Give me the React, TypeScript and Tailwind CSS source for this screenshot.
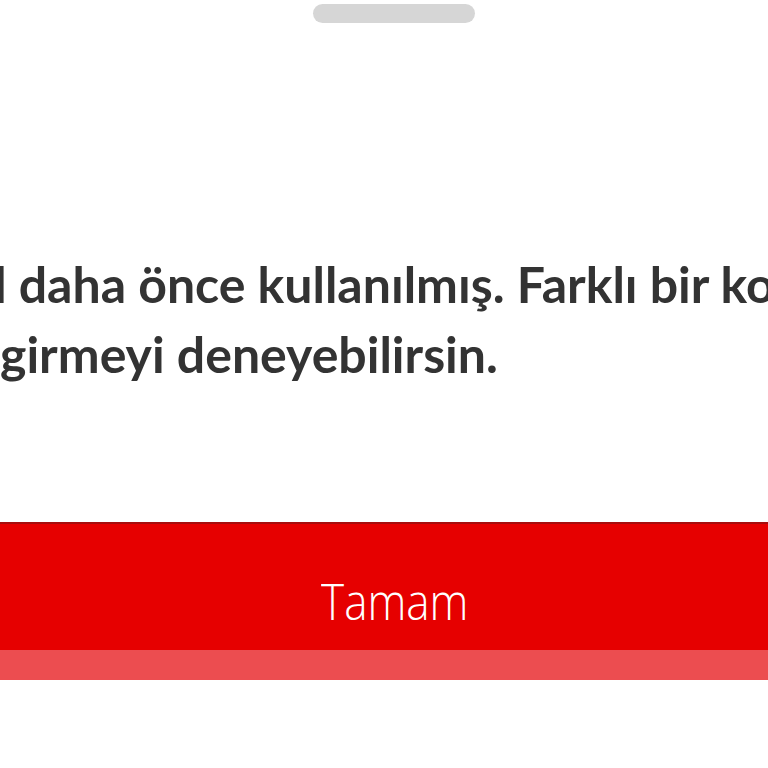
export default function App() {
  return (
    <div className="w-[768px] h-[768px] bg-white overflow-hidden flex flex-col">
      {/* sheet handle */}
      <div className="flex justify-center pt-[4px]">
        <div className="w-[162px] h-[19px] ml-[20px] rounded-full bg-[#d6d6d6]" />
      </div>

      {/* message */}
      <div
        className="mt-[226px] text-[#333333] font-bold text-[50px] leading-[70px] whitespace-nowrap"
        style={{ fontFamily: 'Lato, "Noto Sans", sans-serif' }}
      >
        <p className="ml-[-76px]">kod daha önce kullanılmış. Farklı bir kod</p>
        <p>girmeyi deneyebilirsin.</p>
      </div>

      {/* action */}
      <div className="mt-[133px]">
        <button
          className="w-full h-[128px] pt-[28px] bg-[#e60000] border-t-2 border-[#a80d0d] text-white text-[50px] font-light flex items-center justify-center"
          style={{ fontFamily: '"Open Sans", "Liberation Sans", sans-serif' }}
        >
          <span className="inline-block scale-x-[0.88] ml-[22px]">Tamam</span>
        </button>
        <div className="h-[30px] bg-[#ec4d50]" />
      </div>
    </div>
  );
}
